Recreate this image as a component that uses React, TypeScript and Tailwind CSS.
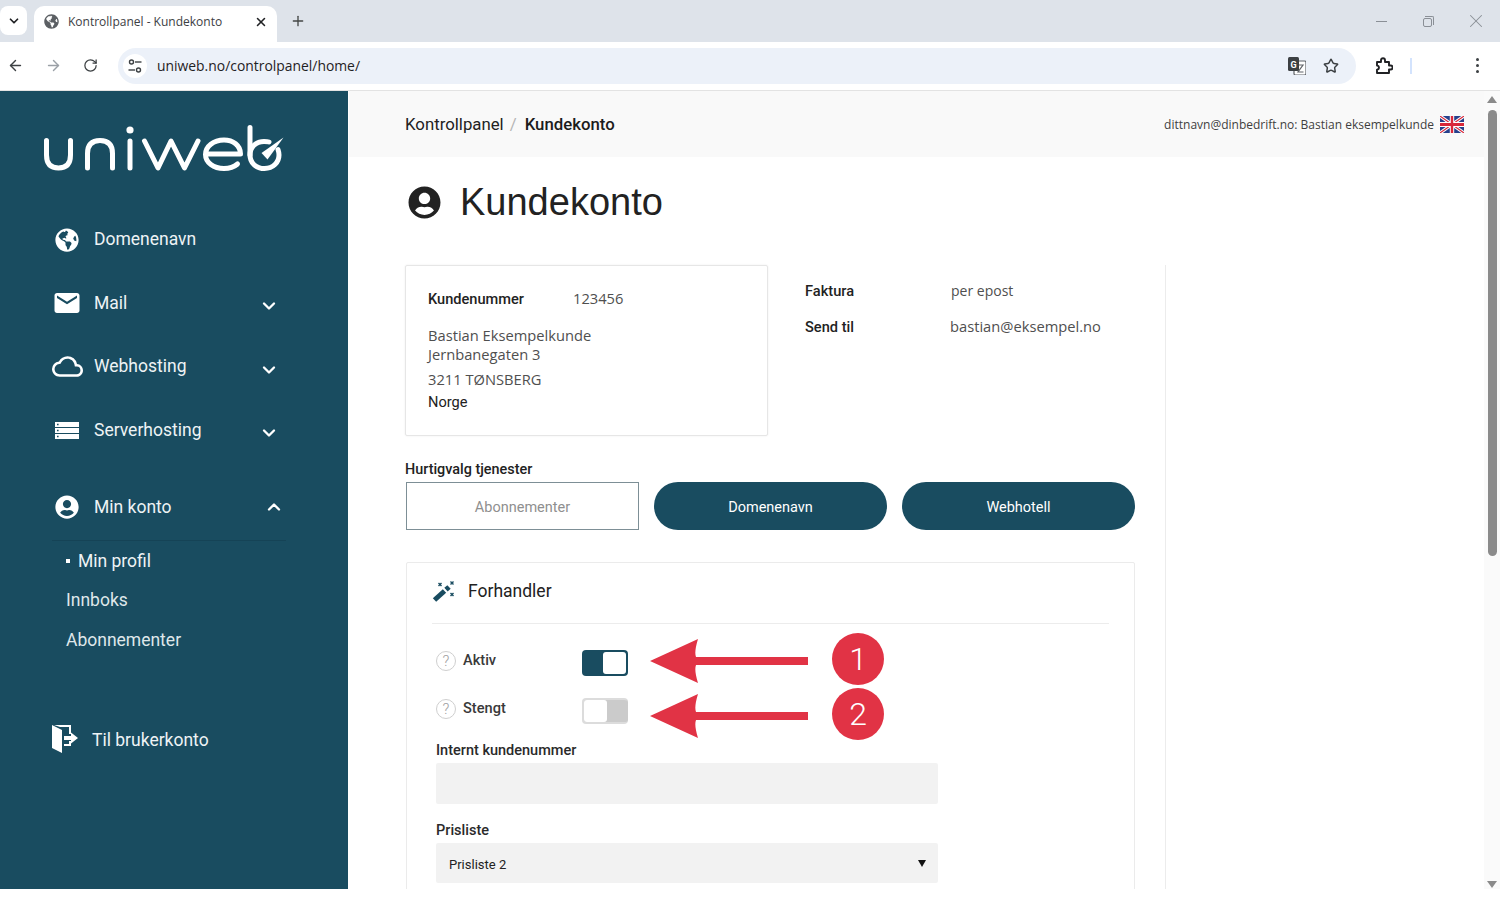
import { ChevronDown, ChevronUp, Plus, X, ArrowLeft, ArrowRight, RotateCw, Star } from "lucide-react";
import { FaGlobeAmericas, FaUserCircle } from "react-icons/fa";
import { MdMail, MdOutlineCloud } from "react-icons/md";
import type { ReactNode } from "react";

const roboto = "font-['Roboto',sans-serif]";
const openSans = "font-['Open_Sans',sans-serif]";

function Logo() {
  return (
    <svg viewBox="43 125 241 48" className="w-[241px] h-[48px] block" fill="none" stroke="#fff" strokeWidth="5" strokeLinecap="round" strokeLinejoin="round">
      <path d="M46.5 140.5 V155 Q46.5 168 58.5 168 Q70.5 168 70.5 155 V140.5" />
      <path d="M87.5 168 V153.5 Q87.5 140.5 100 140.5 Q112.5 140.5 112.5 153.5 V168" />
      <path d="M130 141 V168" />
      <circle cx="130" cy="130" r="3.6" fill="#fff" stroke="none" />
      <path d="M144.5 141 L158 168 L171 141 L184.5 168 L198 141" />
      <path d="M206 154 H240.5 C240.5 145.5 233 140 224 140 C213.5 140 205.5 146.5 205.5 154.5 C205.5 162.5 213.5 168.5 224 168.5 C230 168.5 234 167 237.5 164" />
      <path d="M250 127.5 V155 C250 163 256 168.5 264.5 168.5 C273 168.5 279 162.5 279 155 C279 153 278.5 151 278 149.5" />
      <path d="M250 155 C250 147 256 141.5 264 141.5 C266 141.5 267.5 141.5 269 142" />
      <path d="M261.5 153 L283.5 137.5 L267.5 159.5 Z" fill="#fff" stroke="none" />
    </svg>
  );
}

function Door() {
  return (
    <svg viewBox="0 0 28 30" className="w-[28px] h-[30px]" fill="#fff">
      <path d="M1 1 L11 6 V29 L1 24 Z" />
      <path d="M3 1 H20 V10 H18 V3 H9 Z" />
      <path d="M13 22 H20 V17 H18 V20 H13 Z" />
      <path d="M13 12 H20 V8.5 L27 14 L20 19.5 V16 H13 Z" />
    </svg>
  );
}

function ServerIcon() {
  return (
    <svg viewBox="0 0 24 17" className="w-[24px] h-[17px] ml-[3px]">
      <path fillRule="evenodd" fill="#fff" d="M0 0 H24 V5 H0 Z M2 1.8 V3.2 H3.6 V1.8 Z M0 6 H24 V11 H0 Z M2 7.8 V9.2 H3.6 V7.8 Z M0 12 H24 V17 H0 Z M2 13.8 V15.2 H3.6 V13.8 Z" />
    </svg>
  );
}

function WandIcon() {
  return (
    <svg viewBox="0 0 23 23" className="w-[23px] h-[23px]" fill="none" stroke="#194c60">
      <path d="M2.5 20 L12.5 11" strokeWidth="5" />
      <path d="M14 9.7 L17 7" strokeWidth="5" />
      <path d="M6.5 3 L9.5 6 M9.5 3 L6.5 6 M18.5 1.5 L21.5 4.5 M21.5 1.5 L18.5 4.5 M18.5 13 L21.5 16 M21.5 13 L18.5 16" strokeWidth="1.4" />
    </svg>
  );
}

function Flag() {
  return (
    <svg viewBox="0 0 60 36" className="w-[24px] h-[17px]" preserveAspectRatio="none">
      <rect width="60" height="36" fill="#27408b" />
      <path d="M0 0 L60 36 M60 0 L0 36" stroke="#fff" strokeWidth="7" />
      <path d="M0 0 L60 36 M60 0 L0 36" stroke="#d8283a" strokeWidth="2.5" />
      <path d="M30 0 V36 M0 18 H60" stroke="#fff" strokeWidth="11" />
      <path d="M30 0 V36 M0 18 H60" stroke="#d8283a" strokeWidth="6" />
    </svg>
  );
}

function TuneIcon() {
  return (
    <svg viewBox="0 0 16 16" className="w-[16px] h-[16px]" fill="none" stroke="#3c4043" strokeWidth="1.4">
      <circle cx="4.5" cy="4" r="2" />
      <path d="M8 4 H14.5" />
      <circle cx="11.5" cy="12" r="2" />
      <path d="M1.5 12 H8" />
    </svg>
  );
}

function TranslateIcon() {
  return (
    <svg viewBox="0 0 18 18" className="w-[18px] h-[18px]">
      <rect x="6" y="4" width="12" height="14" rx="1.5" fill="#fff" stroke="#5f6368" strokeWidth="1.2" />
      <path d="M9.5 8 H15 L10 15 H15.5" fill="none" stroke="#5f6368" strokeWidth="1.2" />
      <rect x="0" y="0" width="11" height="14" rx="1.5" fill="#3c4043" />
      <text x="5.5" y="10.5" textAnchor="middle" fontSize="9" fontWeight="700" fill="#fff" fontFamily="Roboto, sans-serif">G</text>
    </svg>
  );
}

function PuzzleIcon() {
  return (
    <svg viewBox="0 0 18 18" className="w-[18px] h-[18px]" fill="none" stroke="#202124" strokeWidth="1.9" strokeLinejoin="round">
      <path d="M2 5 H6 V3.2 A2 2 0 0 1 10 3.2 V5 H14 V8.5 H15.6 A2 2 0 0 1 15.6 12.5 H14 V16 H2 V12.6 C4.6 12.6 4.6 8.6 2 8.6 Z" />
    </svg>
  );
}

function NavItem({ icon, label, chevron, className }: { icon: ReactNode; label: string; chevron?: boolean; className: string }) {
  return (
    <div className={`flex items-center pl-[52px] pr-[69px] ${className}`}>
      <span className="w-[42px] flex justify-start">{icon}</span>
      <span className="flex-1 text-[17.5px] text-[#eef3f5]">{label}</span>
      {chevron && <ChevronDown className="w-[20px] h-[20px] mt-[6px] text-white" strokeWidth={2.8} />}
    </div>
  );
}

function Toggle({ on }: { on: boolean }) {
  return on ? (
    <div className="w-[46px] h-[26px] mt-[3px] rounded-[4px] bg-[#194c60] flex justify-end p-[2px]">
      <div className="w-[23px] h-[22px] rounded-[3px] bg-white" />
    </div>
  ) : (
    <div className="w-[46px] h-[26px] mt-[3px] rounded-[4px] bg-[#cbcbcb] border-l-2 border-y-2 border-[#dcdcdc] flex justify-start">
      <div className="w-[23px] h-[22px] rounded-[3px] bg-white" />
    </div>
  );
}

function Help() {
  return (
    <span className={`w-[20px] h-[20px] rounded-full border border-[#cfcfcf] flex items-center justify-center text-[15px] font-light text-[#a0a0a0] ${roboto}`}>?</span>
  );
}

function Callout({ num, className }: { num: string; className: string }) {
  return (
    <div className={`absolute left-[243px] flex items-center ${className}`}>
      <svg viewBox="0 0 158 46" className="relative top-[2px] w-[158px] h-[46px]">
        <path d="M0 23 L48 1 Q44 14 46 19 H158 V27 H46 Q44 32 48 45 Z" fill="#e13345" />
      </svg>
      <div className={`ml-[24px] w-[52px] h-[52px] rounded-full bg-[#e13345] flex items-center justify-center text-white text-[32px] font-light ${roboto}`}>
        {num}
      </div>
    </div>
  );
}

export default function App() {
  return (
    <div className={`w-[1500px] h-[900px] bg-white overflow-hidden flex flex-col ${roboto}`}>
      {/* Browser tabs */}
      <div className="h-[42px] bg-[#dee3ea] flex items-end shrink-0">
        <div className="w-[27px] h-[29px] mb-[7px] bg-white rounded-[8px] flex items-center justify-center">
          <ChevronDown className="w-[14px] h-[14px] text-[#202124]" strokeWidth={3} />
        </div>
        <div className={`ml-[7px] w-[243px] h-[36px] bg-white rounded-t-[10px] flex items-center pl-[10px] pr-[9px] pb-[5px] ${openSans}`}>
          <FaGlobeAmericas className="w-[15px] h-[15px] text-[#5b5f63]" />
          <span className="ml-[9px] flex-1 text-[12px] text-[#3c4043]">Kontrollpanel - Kundekonto</span>
          <X className="w-[14px] h-[14px] text-[#202124]" strokeWidth={2.6} />
        </div>
        <Plus className="ml-[13px] mb-[13px] w-[16px] h-[16px] text-[#444746]" strokeWidth={2} />
        <div className="flex-1" />
        <div className="flex items-center mb-[10px] mr-[13px] text-[#8a8f96]">
          <div className="w-[11px] h-[1px] bg-[#8a8f96]" />
          <div className="relative ml-[36px] w-[9px] h-[9px] mt-[2px] border border-[#8a8f96] rounded-[2px]">
            <div className="absolute -top-[3px] -right-[3px] w-[9px] h-[9px] border-t border-r border-[#8a8f96] rounded-tr-[2px]" />
          </div>
          <X className="ml-[33px] w-[22px] h-[22px]" strokeWidth={1.1} />
        </div>
      </div>

      {/* Browser toolbar */}
      <div className="h-[49px] bg-white border-b border-[#e3e3e3] flex items-center shrink-0 pb-[1px]">
        <ArrowLeft className="ml-[7px] w-[17px] h-[17px] text-[#3c4043]" strokeWidth={2} />
        <ArrowRight className="ml-[21px] w-[17px] h-[17px] text-[#9aa0a6]" strokeWidth={2} />
        <RotateCw className="ml-[21px] w-[15px] h-[15px] text-[#3c4043]" strokeWidth={2} />
        <div className="ml-[20px] w-[1238px] h-[36px] rounded-full bg-[#ecf1f9] flex items-center pl-[5px] pr-[17px]">
          <div className="w-[24px] h-[24px] rounded-full bg-white flex items-center justify-center">
            <TuneIcon />
          </div>
          <span className={`ml-[9px] flex-1 text-[13.9px] pl-[1px] pt-[2px] text-[#1f2124] ${openSans}`}>uniweb.no/controlpanel/home/</span>
          <TranslateIcon />
          <Star className="ml-[17px] w-[16px] h-[16px] text-[#3c4043]" strokeWidth={2.2} />
        </div>
        <span className="ml-[19px]"><PuzzleIcon /></span>
        <div className="ml-[17px] w-[2px] h-[16px] bg-[#d3e3fd]" />
        <div className="ml-[64px] flex flex-col gap-[3px]">
          <div className="w-[3px] h-[3px] rounded-full bg-[#3c4043]" />
          <div className="w-[3px] h-[3px] rounded-full bg-[#3c4043]" />
          <div className="w-[3px] h-[3px] rounded-full bg-[#3c4043]" />
        </div>
      </div>

      {/* Page */}
      <div className="h-[798px] flex shrink-0">
        <aside className="w-[348px] shrink-0 bg-[#194c60] flex flex-col">
          <div className="pl-[43px] pt-[34px] pb-[40px]">
            <Logo />
          </div>
          <NavItem className="h-[55px] -mt-[1px]" label="Domenenavn" icon={<FaGlobeAmericas className="w-[24px] h-[24px] ml-[3px] text-white" />} />
          <NavItem className="h-[64px] mt-[4px]" chevron label="Mail" icon={<MdMail className="w-[30px] h-[30px] text-white" />} />
          <NavItem className="h-[63px]" chevron label="Webhosting" icon={<MdOutlineCloud className="w-[31px] h-[31px] text-white" />} />
          <NavItem className="h-[63px] pt-[1px]" chevron label="Serverhosting" icon={<ServerIcon />} />

          <div className="mt-[17px] ml-[52px] mr-[62px] h-[63px] border-b border-[#154356] flex items-center pr-[2px] pb-[5px]">
            <span className="w-[42px]">
              <FaUserCircle className="w-[24px] h-[24px] ml-[3px] text-white" />
            </span>
            <span className="flex-1 pt-[2px] text-[17.5px] text-[#eef3f5]">Min konto</span>
            <ChevronUp className="w-[20px] h-[20px] text-white" strokeWidth={2.8} />
          </div>
          <div className="pl-[66px] text-[17.5px] text-[#dfe7ea]">
            <div className="h-[39px] pt-[1px] flex items-center text-[#eef3f5]">
              <span className="w-[4px] h-[4px] bg-white mr-[8px]" />
              Min profil
            </div>
            <div className="h-[40px] pt-[1px] flex items-center">Innboks</div>
            <div className="h-[40px] flex items-center">Abonnementer</div>
          </div>
          <div className="mt-[59px] pl-[51px] h-[40px] flex items-center">
            <Door />
            <span className="ml-[13px] pt-[2px] text-[17.5px] text-[#eef3f5]">Til brukerkonto</span>
          </div>
        </aside>

        <main className="flex-1 ml-[1px] overflow-hidden flex flex-col">
          <div className="h-[66px] shrink-0 bg-[#f9f9f9] flex items-center pl-[56px] pr-[20px] text-[16.8px]">
            <span className="pt-[1px] text-[#222]">Kontrollpanel</span>
            <span className="ml-[6px] pt-[1px] text-[#b5b5b5]">/</span>
            <span className="ml-[8px] pt-[1px] font-medium text-[#1c1c1c]">Kundekonto</span>
            <div className="flex-1" />
            <span className={`pt-[1px] text-[12px] text-[#3f3f3f] ${openSans}`}>dittnavn@dinbedrift.no: Bastian eksempelkunde</span>
            <span className="ml-[6px]"><Flag /></span>
          </div>

          <div className="flex items-center pl-[59px] mt-[20px] h-[50px]">
            <FaUserCircle className="w-[33px] h-[33px] text-[#222]" />
            <h1 className="ml-[19px] text-[38px] leading-none text-[#222] font-['Liberation_Sans',sans-serif]">Kundekonto</h1>
          </div>

          <div className="mt-[38px] ml-[56px] w-[761px] h-[195px] flex border-r border-[#ececec]">
            <div className={`w-[363px] h-[171px] border border-[#e6e6e6] rounded-[2px] shadow-[0_0_2px_rgba(0,0,0,0.08)] pl-[22px] pt-[21px] text-[14.7px] text-[#4f4f4f] ${openSans}`}>
              <div className="flex h-[22px] items-center">
                <span className={`w-[145px] mt-[4px] text-[14.6px] font-medium text-[#222] ${roboto}`}>Kundenummer</span>
                <span>123456</span>
              </div>
              <div className="mt-[17px] leading-[19px]">Bastian Eksempelkunde</div>
              <div className="leading-[19px]">Jernbanegaten 3</div>
              <div className="mt-[6px] leading-[19px]">3211 TØNSBERG</div>
              <div className={`mt-[3px] leading-[20px] text-[14.6px] text-[#222] ${roboto}`}>Norge</div>
            </div>
            <div className={`ml-[37px] pt-[14px] text-[14.7px] text-[#4f4f4f] ${openSans}`}>
              <div className="flex h-[22px] items-center">
                <span className={`w-[146px] pt-[4px] text-[14.6px] font-medium text-[#222] ${roboto}`}>Faktura</span>
                <span className="text-[14px]">per epost</span>
              </div>
              <div className="flex h-[22px] items-center mt-[14px]">
                <span className={`w-[145px] pt-[4px] text-[14.6px] font-medium text-[#222] ${roboto}`}>Send til</span>
                <span>bastian@eksempel.no</span>
              </div>
            </div>
          </div>

          <div className="ml-[56px] w-[761px] border-r border-[#ececec] flex-1 min-h-0">
            <div className="w-[731px] ml-[1px]">
              <div className="pt-[1px] h-[18px] text-[14.4px] font-medium text-[#222] leading-[18px] -ml-[1px]">Hurtigvalg tjenester</div>
              <div className="mt-[4px] flex gap-[15px] text-[14.5px]">
                <div className="w-[233px] h-[48px] pt-[3px] border border-[#7d8f96] flex items-center justify-center text-[#8f8f8f]">Abonnementer</div>
                <div className="w-[233px] h-[48px] pt-[3px] rounded-full bg-[#194c60] flex items-center justify-center text-white">Domenenavn</div>
                <div className="w-[233px] h-[48px] pt-[3px] rounded-full bg-[#194c60] flex items-center justify-center text-white">Webhotell</div>
              </div>

              <div className="relative mt-[32px] w-[729px] h-[400px] border border-[#ebebeb] rounded-[2px] px-[25px]">
                <div className="h-[61px] border-b border-[#ececec] flex items-center pb-[4px]">
                  <WandIcon />
                  <span className="ml-[13px] text-[17.5px] text-[#222]">Forhandler</span>
                </div>
                <div className="mt-[24px] ml-[4px] h-[26px] flex items-center">
                  <Help />
                  <span className="ml-[7px] w-[119px] text-[14.6px] font-medium text-[#3a3a3a]">Aktiv</span>
                  <Toggle on />
                </div>
                <div className="mt-[22px] ml-[4px] h-[26px] flex items-center">
                  <Help />
                  <span className="ml-[7px] w-[119px] text-[14.6px] font-medium text-[#3a3a3a]">Stengt</span>
                  <Toggle on={false} />
                </div>
                <Callout num="1" className="top-[70px]" />
                <Callout num="2" className="top-[125px]" />

                <div className="mt-[20px] ml-[4px] text-[14.5px] font-medium text-[#2a2a2a] leading-[18px]">Internt kundenummer</div>
                <div className="mt-[3px] ml-[4px] w-[502px] h-[41px] bg-[#f2f2f2] rounded-[2px]" />
                <div className="mt-[18px] ml-[4px] text-[14.5px] font-medium text-[#2a2a2a] leading-[18px]">Prisliste</div>
                <div className="mt-[3px] ml-[4px] w-[502px] h-[40px] bg-[#f2f2f2] rounded-[2px] flex items-center justify-between pl-[13px] pr-[12px] text-[13px] text-[#222]">
                  <span className="pt-[3px]">Prisliste 2</span>
                  <span className="w-0 h-0 border-l-[4px] border-r-[4px] border-t-[7px] border-l-transparent border-r-transparent border-t-[#111]" />
                </div>
              </div>
            </div>
          </div>
        </main>

        {/* Page scrollbar */}
        <div className="w-[16px] shrink-0 bg-[#fafafa] flex flex-col items-center pt-[5px] pb-[1px]">
          <span className="w-0 h-0 border-l-[5px] border-r-[5px] border-b-[7px] border-l-transparent border-r-transparent border-b-[#8a8a8a]" />
          <div className="mt-[7px] w-[9px] h-[446px] rounded-full bg-[#8b8b8b]" />
          <div className="flex-1" />
          <span className="w-0 h-0 border-l-[5px] border-r-[5px] border-t-[7px] border-l-transparent border-r-transparent border-t-[#8a8a8a]" />
        </div>
      </div>
    </div>
  );
}
